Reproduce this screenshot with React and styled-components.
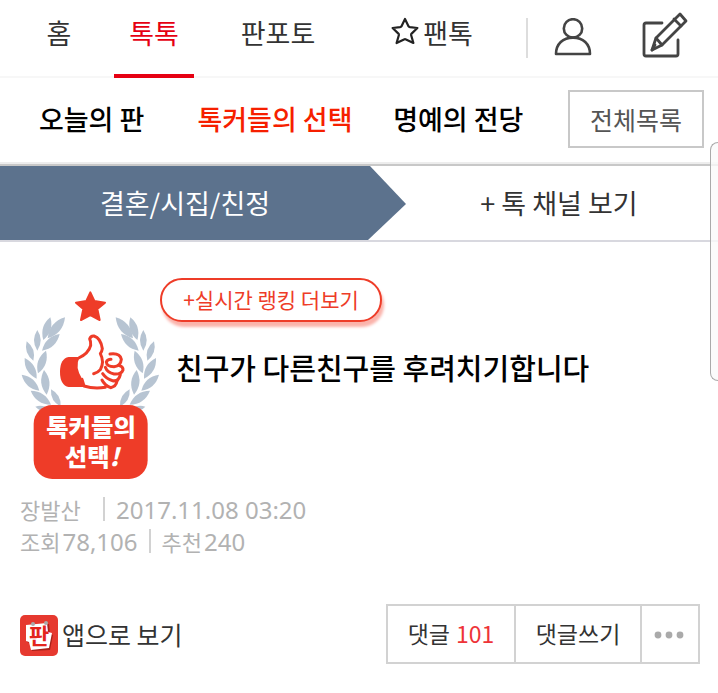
import React from "react";
import styled, { createGlobalStyle } from "styled-components";

const GlobalStyle = createGlobalStyle`
  * {
    box-sizing: border-box;
  }
  body {
    margin: 0;
    background: #fff;
    color: #333;
    font-family: "Noto Sans CJK KR", "Noto Sans", sans-serif;
    overflow-x: hidden;
  }
  a {
    color: inherit;
    text-decoration: none;
  }
  button {
    font-family: inherit;
    cursor: pointer;
  }
`;

const Page = styled.div`
  position: relative;
  width: 100%;
`;

const TopBar = styled.header`
  display: flex;
  height: 78px;
  border-bottom: 2px solid #f7f7f7;
`;

const Tabs = styled.nav`
  flex: 1;
  display: grid;
  grid-template-columns: 110fr 80fr 168fr 140fr;
  padding: 0 24px 0 4px;
`;

const Tab = styled.a`
  display: flex;
  align-items: center;
  justify-content: center;
  gap: 4px;
  height: 78px;
  padding-bottom: ${(p) => (p.$active ? "8px" : "12px")};
  border-bottom: ${(p) => (p.$active ? "4px solid #e60012" : "none")};
  color: ${(p) => (p.$active ? "#e60012" : "#333")};
  font-size: 27px;
  line-height: 40px;
  white-space: nowrap;
`;

const Tools = styled.div`
  display: flex;
  align-items: flex-end;
  justify-content: space-between;
  width: 192px;
  height: 40px;
  margin-top: 18px;
  padding: 0 30px 0 26px;
  border-left: 2px solid #ddd;
`;

const ToolButton = styled.button`
  display: flex;
  align-items: center;
  padding: 0;
  border: none;
  background: none;
`;

const SubBar = styled.div`
  display: flex;
  align-items: center;
  height: 88px;
  padding: 0 14px 4px 0;
  border-bottom: 2px solid #c8c8c8;
  box-shadow: inset 0 -2px 0 #ededed;
`;

const SubLinks = styled.nav`
  flex: 1;
  display: grid;
  grid-template-columns: repeat(3, 1fr);
  padding-right: 18px;
  text-align: center;
`;

const SubLink = styled.a`
  color: ${(p) => (p.$active ? "#f61f00" : "#000")};
  font-size: 27px;
  font-weight: 500;
  line-height: 40px;
  white-space: nowrap;
`;

const AllButton = styled.button`
  width: 136px;
  height: 58px;
  padding: 0;
  border: 2px solid #c8c8c8;
  background: #fff;
  color: #555;
  font-size: 25px;
  line-height: 36px;
`;

const ChannelBar = styled.div`
  display: grid;
  grid-template-columns: 406fr 312fr;
  height: 76px;
  border-bottom: 2px solid #d8d8df;
`;

const Channel = styled.a`
  display: flex;
  align-items: center;
  justify-content: center;
  padding-right: 36px;
  background: #5c728d;
  clip-path: polygon(0 0, calc(100% - 36px) 0, 100% 38px, calc(100% - 38px) 100%, 0 100%);
  color: #fff;
  font-size: 27px;
  line-height: 40px;
`;

const ChannelMore = styled.a`
  display: flex;
  align-items: center;
  justify-content: center;
  padding-right: 6px;
  font-size: 27px;
  line-height: 40px;
`;

const Article = styled.main`
  padding: 36px 18px 0 20px;
`;

const Head = styled.div`
  display: flex;
`;

const BadgeBox = styled.div`
  width: 140px;
  padding-top: 12px;
`;

const HeadText = styled.div`
  flex: 1;
`;

const RankButton = styled.button`
  display: block;
  width: 222px;
  height: 44px;
  padding: 0 0 2px;
  border: 2px solid #ee3c28;
  border-radius: 22px;
  background: #fff;
  box-shadow: 2px 5px 3px #fbb3ab;
  color: #ee3c28;
  font-size: 21px;
  line-height: 30px;
`;

const Title = styled.h1`
  margin: 24px 0 0 16px;
  color: #000;
  font-size: 29px;
  font-weight: 500;
  line-height: 42px;
`;

const Meta = styled.div`
  margin-top: 8px;
  color: #b2b2b2;
`;

const MetaRow = styled.div`
  display: flex;
  align-items: center;
  gap: 2px;
  height: 32px;
  font-size: 22px;
`;

const MetaNumber = styled.span`
  font-family: "Noto Sans", sans-serif;
  font-size: 24px;
`;

const Author = styled.span`
  width: 72px;
`;

const Divider = styled.span`
  width: 2px;
  height: 24px;
  margin: 0 9px;
  background: #d2d2d2;
`;

const Bottom = styled.div`
  display: flex;
  align-items: center;
  justify-content: space-between;
  margin-top: 47px;
`;

const AppLink = styled.a`
  display: flex;
  align-items: center;
  gap: 4px;
  font-size: 25px;
  line-height: 36px;
`;

const Actions = styled.div`
  display: flex;
  height: 60px;
  border: 2px solid #d2d2d2;
`;

const Action = styled.button`
  display: flex;
  align-items: center;
  justify-content: center;
  gap: 6px;
  width: ${(p) => p.$width};
  padding: 0 0 2px;
  border: none;
  border-left: ${(p) => (p.$first ? "none" : "2px solid #d2d2d2")};
  background: #fff;
  color: #333;
  font-size: 23px;
  line-height: 34px;
`;

const Count = styled.span`
  color: #ee3338;
`;

const EdgeHandle = styled.div`
  position: absolute;
  top: 142px;
  right: 0;
  width: 8px;
  height: 239px;
  border: 1px solid #aaa;
  border-right: none;
  border-radius: 8px 0 0 8px;
  background: rgba(250, 250, 250, 0.8);
`;

function StarIcon() {
  return (
    <svg width="28" height="32" viewBox="0 0 28 32" fill="none" stroke="#222" strokeWidth="2.2" strokeLinejoin="round">
      <path d="M14 2 L17.6 9.4 Q18 10 19 10.2 L26.4 11 L20.6 16.6 Q20 17.2 20.1 18 L22.4 26 L15 22.4 Q14 22 13 22.4 L5.6 26 L7.9 18 Q8 17.2 7.4 16.6 L1.6 11 L9 10.2 Q10 10 10.4 9.4 Z" />
    </svg>
  );
}

function UserIcon() {
  return (
    <svg width="38" height="40" viewBox="0 0 38 40" fill="none" stroke="#444" strokeWidth="2.6" strokeLinejoin="round">
      <circle cx="19" cy="10.4" r="9.2" />
      <path d="M2 36 C2 26 9 19.6 19 19.6 S36 26 36 36 Z" />
    </svg>
  );
}

function WriteIcon() {
  return (
    <svg width="46" height="46" viewBox="0 0 46 46" fill="none" stroke="#444" strokeWidth="2.8" strokeLinecap="round" strokeLinejoin="round">
      <path d="M20 11 H4 Q2 11 2 13 V42 Q2 44 4 44 H34 Q36 44 36 42 V28" />
      <path d="M38 2 L44 9 L20 33 L10 38 L14 26 Z" />
      <path d="M32 7 L39 14 M14 26 L20 33 M10 38 L13 33" />
    </svg>
  );
}

// [base x, base y, tip x, tip y] for the left half of the wreath
const LEAVES = [
  [100, 210, 121, 142],
  [113, 205, 165, 142],
  [82, 242, 82, 180],
  [96, 242, 149, 192],
  [70, 272, 50, 214],
  [84, 310, 108, 242],
  [80, 326, 44, 264],
  [110, 374, 102, 300],
  [88, 362, 35, 314],
  [123, 404, 62, 362],
  [152, 410, 123, 358],
  [118, 420, 76, 410],
];

function Leaf({ points: [x1, y1, x2, y2] }) {
  const dx = (x2 - x1) * 0.33;
  const dy = (y2 - y1) * 0.33;
  const mx = (x1 + x2) / 2;
  const my = (y1 + y2) / 2;
  return (
    <path
      d={`M${x1} ${y1} Q${mx - dy} ${my + dx} ${x2} ${y2} Q${mx + dy} ${my - dx} ${x1} ${y1}Z`}
    />
  );
}

function ChoiceBadge() {
  const leaves = LEAVES.map((points, i) => <Leaf key={i} points={points} />);
  return (
    <svg width="140" height="190" viewBox="30 60 420 570" role="img" aria-label="톡커들의 선택!">
      <g fill="#b7c4d2">
        {leaves}
        <g transform="translate(482 0) scale(-1 1)">{leaves}</g>
      </g>
      <path
        fill="#ee3c28"
        stroke="#ee3c28"
        strokeWidth="6"
        strokeLinejoin="round"
        d="M241 67 L253 93 L285 98 L262 117 L269 150 L241 135 L213 150 L220 117 L198 98 L229 93 Z"
      />
      <path fill="#ee3c28" d="M212 261 H176 Q150 266 150 306 Q150 346 176 351 H220 Z" />
      <g fill="#fff" stroke="#ee3c28" strokeWidth="9" strokeLinecap="round" strokeLinejoin="round">
        <path
          stroke="none"
          d="M208 263 Q236 250 243 226 L290 262 L330 270 L334 318 L304 352 L222 351 L216 326 Q194 290 208 263 Z"
        />
        <path d="M206 264 Q236 250 242 226 Q243 214 239 207 Q242 197 252 198 Q272 204 277 236 Q276 244 271 251 Q284 276 271 299 Q264 308 251 311" />
        <path d="M216 328 L222 348 Q252 358 286 352" />
        <path d="M276 330 Q284 346 302 353 Q318 350 321 334" />
        <path d="M278 311 Q290 328 308 332 Q326 336 331 314" />
        <path d="M286 292 Q292 308 312 312 Q334 314 339 300 Q340 290 328 287" />
        <path d="M300 252 Q330 248 334 268 Q332 288 312 290 Q290 290 289 276 Q292 268 303 268" />
      </g>
      <rect x="71" y="405" width="342" height="222" rx="56" fill="#ee3c28" />
      <g fill="#fff" fontFamily="Noto Sans CJK KR, sans-serif" fontWeight="900" fontSize="73" textAnchor="middle">
        <text x="243" y="498">톡커들의</text>
        <text x="246" y="587">
          선택
          <tspan fontStyle="italic">!</tspan>
        </text>
      </g>
    </svg>
  );
}

function PannIcon() {
  return (
    <svg width="38" height="46" viewBox="0 -4 38 46" aria-hidden="true">
      <rect width="38" height="41" rx="5" fill="#e6392f" />
      <path d="M8 11 L29 9 L30 19 L33 20 L30 35 L12 36 L10 28 L7 27 Z" fill="#a92119" />
      <path d="M6 10 L27 8 L28 17 L32 18 L29 33 L11 35 L9 27 L6 26 Z" fill="#fff" />
      <text x="19" y="29" fill="#e3251d" fontFamily="Noto Sans CJK KR, sans-serif" fontWeight="700" fontSize="22" textAnchor="middle">
        판
      </text>
      <circle cx="13" cy="9" r="2" fill="#aaa" />
      <circle cx="26" cy="8" r="2" fill="#aaa" />
    </svg>
  );
}

function DotsIcon() {
  return (
    <svg width="32" height="12" viewBox="0 0 32 12" fill="#aaa">
      <circle cx="4" cy="8" r="3.4" />
      <circle cx="15" cy="8" r="3.4" />
      <circle cx="26" cy="8" r="3.4" />
    </svg>
  );
}

export default function App() {
  return (
    <Page>
      <GlobalStyle />
      <TopBar>
        <Tabs>
          <Tab href="#home">홈</Tab>
          <Tab href="#talk" $active>톡톡</Tab>
          <Tab href="#photo">판포토</Tab>
          <Tab href="#fan">
            <StarIcon />
            팬톡
          </Tab>
        </Tabs>
        <Tools>
          <ToolButton type="button" aria-label="내 정보">
            <UserIcon />
          </ToolButton>
          <ToolButton type="button" aria-label="글쓰기">
            <WriteIcon />
          </ToolButton>
        </Tools>
      </TopBar>

      <SubBar>
        <SubLinks>
          <SubLink href="#today">오늘의 판</SubLink>
          <SubLink href="#choice" $active>톡커들의 선택</SubLink>
          <SubLink href="#fame">명예의 전당</SubLink>
        </SubLinks>
        <AllButton type="button">전체목록</AllButton>
      </SubBar>

      <ChannelBar>
        <Channel href="#channel">결혼/시집/친정</Channel>
        <ChannelMore href="#channels">+ 톡 채널 보기</ChannelMore>
      </ChannelBar>

      <Article>
        <Head>
          <BadgeBox>
            <ChoiceBadge />
          </BadgeBox>
          <HeadText>
            <RankButton type="button">+실시간 랭킹 더보기</RankButton>
            <Title>친구가 다른친구를 후려치기합니다</Title>
          </HeadText>
        </Head>

        <Meta>
          <MetaRow>
            <Author>장발산</Author>
            <Divider />
            <MetaNumber>2017.11.08 03:20</MetaNumber>
          </MetaRow>
          <MetaRow>
            조회
            <MetaNumber>78,106</MetaNumber>
            <Divider />
            추천
            <MetaNumber>240</MetaNumber>
          </MetaRow>
        </Meta>

        <Bottom>
          <AppLink href="#app">
            <PannIcon />
            앱으로 보기
          </AppLink>
          <Actions>
            <Action type="button" $first $width="126px">
              댓글 <Count>101</Count>
            </Action>
            <Action type="button" $width="126px">댓글쓰기</Action>
            <Action type="button" $width="58px" aria-label="더보기">
              <DotsIcon />
            </Action>
          </Actions>
        </Bottom>
      </Article>

      <EdgeHandle />
    </Page>
  );
}
